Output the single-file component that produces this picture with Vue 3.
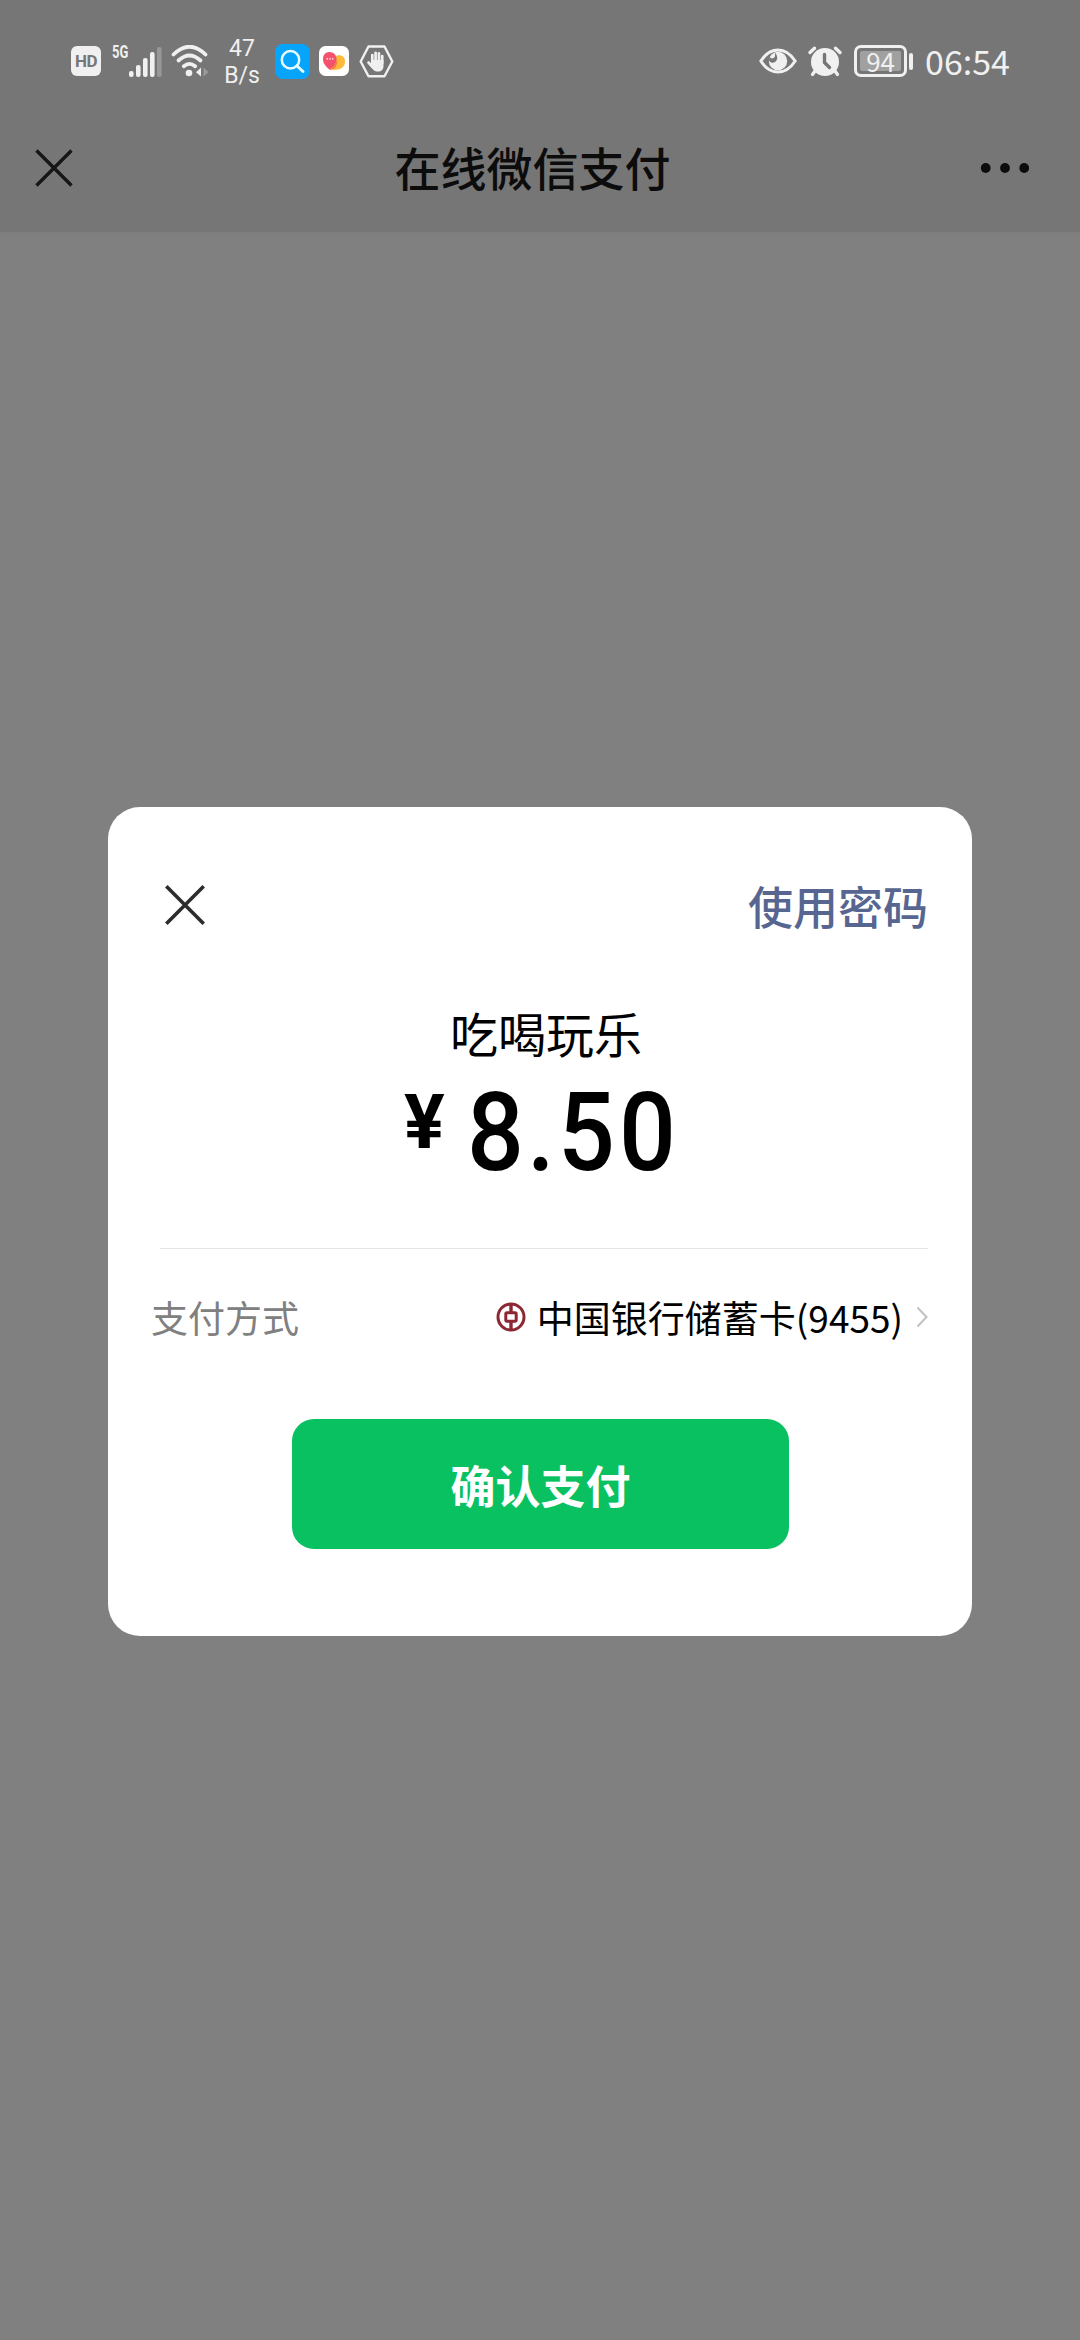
<script setup>
const signalBars = [
  { x: 0, h: 6 },
  { x: 7, h: 12 },
  { x: 14, h: 19 },
  { x: 21, h: 25 },
  { x: 28, h: 30, faded: true },
]
const payment = {
  merchant: '吃喝玩乐',
  amount: ['8', '.', '5', '0'],
  bank: '中国银行储蓄卡(9455)',
}
</script>

<template>
  <div class="screen">
    <header class="top">
      <div class="status">
        <div class="status-left">
          <span class="hd">HD</span>
          <span class="net">5G</span>
          <svg class="signal" width="33" height="31" viewBox="0 0 33 31">
            <rect
              v-for="b in signalBars" :key="b.x" :x="b.x" :y="31 - b.h"
              width="4.6" :height="b.h" rx="2" :fill="b.faded ? '#979797' : '#f0f0f0'"
            />
          </svg>
          <svg class="wifi" width="38" height="32" viewBox="0 0 38 32">
            <g fill="none" stroke="#f0f0f0" stroke-width="3.8" stroke-linecap="round">
              <path d="M2.5 9.5Q18.500 -6 34.500 9.500" />
              <path d="M7.500 15.500Q18.500 5.500 29.500 15.500" />
              <path d="M12.800 21.200Q18.500 16.500 24.200 21.200" />
            </g>
            <circle cx="18" cy="28" r="3.300" fill="#f0f0f0" />
            <path d="M25 27.200L30 22.500V31.500Z" fill="#f0f0f0" />
            <path d="M32.500 22.500L37.500 27L32.500 31.500Z" fill="#9a9a9a" />
          </svg>
          <div class="speed"><span>47</span><span>B/s</span></div>
          <svg class="search" width="35" height="35" viewBox="0 0 35 35">
            <rect width="35" height="35" rx="8" fill="#06a5fb" />
            <g fill="none" stroke="#e8fbff" stroke-width="2.500" stroke-linecap="round">
              <circle cx="15.500" cy="15.700" r="8.700" />
              <path d="M22 22L28 27.500" stroke-width="3" />
            </g>
          </svg>
          <svg class="hearts" width="30" height="30" viewBox="0 0 30 30">
            <rect width="30" height="30" rx="6.500" fill="#fff" />
            <path d="M18 9.500C23 8.500 26 11 26 15.500C26 21 22 24 14 24L10 17Z" fill="#fdbb3c" />
            <path d="M11 24C6 20 4 17 4 13C4 8.500 7 6 10.500 6C14.500 6 17.500 9 17.500 13C17.500 17 15 20.500 11 24Z" fill="#f4516c" />
            <path d="M17.500 11C18.500 16 15 21 11 24C16 24 20 18 17.500 11Z" fill="#f57b38" />
            <path d="M7.500 12.800h7" stroke="#fff" stroke-width="1.300" stroke-dasharray="1.500 1.200" />
          </svg>
          <svg class="hand" width="35" height="33" viewBox="0 0 35 33">
            <path d="M9.500 1.500H25.500L33.300 16.500L25.500 31.200H9.500L1.700 16.500Z" fill="none" stroke="#f0f0f0" stroke-width="2.400" stroke-linejoin="round" />
            <g fill="none" stroke="#f0f0f0" stroke-width="2.700" stroke-linecap="round">
              <path d="M13.300 18V10M16.600 17V7.800M19.900 17V8.300M23.200 18V11" />
              <path d="M9.500 17.500L13.500 22" />
            </g>
            <path d="M12 15H24.500V21C24.500 24.500 22.500 26.500 19 26.500C15 26.500 14 25 12 21.500Z" fill="#f0f0f0" />
          </svg>
        </div>
        <div class="status-right">
          <svg class="eye" width="38" height="26" viewBox="0 0 38 26">
            <path d="M1.800 13Q9 2 19 2T36.200 13Q29 24 19 24T1.800 13Z" fill="none" stroke="#f0f0f0" stroke-width="3" stroke-linejoin="round" />
            <circle cx="19" cy="13" r="9.200" fill="#f0f0f0" />
            <path d="M10.500 8.500Q12 11.500 15 9.800Q17 8 15.500 4.500Q18.500 7 18.200 10.500Q17 15 13 14.800Q11 14.200 10 12.500Z" fill="#767676" />
          </svg>
          <svg class="alarm" width="34" height="31" viewBox="0 0 34 31">
            <circle cx="17" cy="16" r="14" fill="#f0f0f0" />
            <g stroke="#f0f0f0" stroke-width="3.300" stroke-linecap="round">
              <path d="M2 6.500L6.500 2.200M27.500 2.200L32 6.500" />
              <path d="M7 25L4.500 28.500M27 25L29.500 28.500" />
            </g>
            <path d="M16.500 8.500V16.500L21.500 21.500" fill="none" stroke="#767676" stroke-width="3.400" stroke-linecap="round" stroke-linejoin="round" />
          </svg>
          <div class="battery"><span>94</span></div>
          <i class="nub"></i>
          <time class="clock">06:54</time>
        </div>
      </div>
      <nav class="bar">
        <svg class="bar-close" width="38" height="38" viewBox="0 0 38 38">
          <path d="M1.500 1.500L36.500 36.500M36.500 1.500L1.500 36.500" stroke="#161616" stroke-width="3.400" />
        </svg>
        <h1>在线微信支付</h1>
        <svg class="more" width="50" height="12" viewBox="0 0 50 12">
          <circle cx="5.700" cy="6" r="4.900" /><circle cx="25" cy="6" r="4.900" /><circle cx="44.200" cy="6" r="4.900" />
        </svg>
      </nav>
    </header>

    <main class="dialog">
      <div class="dialog-head">
        <svg width="40" height="40" viewBox="0 0 40 40">
          <path d="M1.300 1.300L38.700 38.700M38.700 1.300L1.300 38.700" stroke="#2c2c2c" stroke-width="3.600" />
        </svg>
        <a class="pwd">使用密码</a>
      </div>
      <p class="merchant">{{ payment.merchant }}</p>
      <div class="price">
        <span class="yen">¥</span>
        <span class="amount"><span v-for="(c, i) in payment.amount" :key="i" :class="{ dot: c === '.' }">{{ c }}</span></span>
      </div>
      <hr />
      <div class="method">
        <span class="label">支付方式</span>
        <svg class="boc" width="30" height="30" viewBox="0 0 30 30">
          <g fill="none" stroke="#8e2734">
            <circle cx="15" cy="15" r="13" stroke-width="3" />
            <rect x="9.800" y="10.800" width="10.400" height="8.400" rx="1.200" stroke-width="3" />
            <path d="M15 2V10M15 20V28" stroke-width="3.400" />
          </g>
        </svg>
        <span class="bank">{{ payment.bank }}</span>
        <svg class="chev" width="12" height="22" viewBox="0 0 12 22">
          <path d="M1.500 1.500L10.500 11L1.500 20.500" fill="none" stroke="#c4c4c4" stroke-width="2.200" />
        </svg>
      </div>
      <button class="confirm">确认支付</button>
    </main>
  </div>
</template>

<style>
body {
  margin: 0;
  background: #808080;
}
</style>

<style scoped>
.screen {
  width: 1080px;
  height: 2340px;
  overflow: hidden;
  background: #808080;
  font-family: "Noto Sans CJK SC", sans-serif;
}
.top {
  height: 232px;
  background: #767676;
  box-shadow: 0 0 5px #7a7a7a;
}
.status {
  height: 122px;
  display: flex;
  justify-content: space-between;
  align-items: center;
  padding: 0 70px 0 71px;
  color: #f0f0f0;
}
.status-left,
.status-right {
  display: flex;
  align-items: center;
}
.status svg {
  display: block;
  flex: none;
}
.hd {
  width: 30px;
  height: 30px;
  line-height: 31px;
  border-radius: 6px;
  background: #f0f0f0;
  color: #767676;
  text-align: center;
  font-family: Roboto, sans-serif;
  font-weight: 700;
  font-size: 17px;
  letter-spacing: -0.5px;
}
.net {
  width: 17px;
  margin: -18px 0 0 11px;
  font: 700 18px/18px Roboto, sans-serif;
  transform: scaleX(0.72);
  transform-origin: left;
}
.wifi {
  margin-left: 9px;
}
.speed {
  width: 36px;
  margin-left: 15px;
  display: flex;
  flex-direction: column;
  align-items: center;
  font: 400 23px/27px Roboto, sans-serif;
  margin-top: 1px;
}
.search {
  margin-left: 15px;
}
.hearts {
  margin-left: 9px;
}
.hand {
  margin-left: 10px;
}
.alarm {
  margin-left: 11px;
}
.battery {
  box-sizing: border-box;
  width: 53px;
  height: 32px;
  margin-left: 12px;
  padding: 3px;
  border: 3px solid #f0f0f0;
  border-radius: 7px;
}
.battery span {
  display: block;
  height: 20px;
  border-radius: 2px;
  background: #a0a0a0;
  text-align: center;
  font: 400 26px/20px "Noto Sans CJK SC", sans-serif;
}
.nub {
  width: 4px;
  height: 17px;
  margin-left: 2px;
  border-radius: 2px;
  background: #f0f0f0;
}
.clock {
  margin: -1px 0 0 12px;
  font-size: 34px;
  line-height: 40px;
}
.bar {
  height: 92px;
  display: flex;
  align-items: center;
  justify-content: space-between;
  padding: 0 50px 0 35px;
}
.bar h1 {
  margin: -4px 0 0 12px;
  font-size: 46px;
  line-height: 60px;
  font-weight: 500;
  color: #0c0c0c;
}
.more {
  fill: #0c0c0c;
}
.dialog {
  box-sizing: border-box;
  width: 864px;
  height: 829px;
  margin: 575px auto 0;
  padding: 60px 44px 0;
  display: flex;
  flex-direction: column;
  border-radius: 32px;
  background: #fff;
}
.dialog-head {
  height: 76px;
  display: flex;
  justify-content: space-between;
  align-items: center;
  padding-left: 13px;
}
.pwd {
  margin-top: 2px;
  font-size: 45px;
  line-height: 60px;
  font-weight: 500;
  color: #576690;
}
.merchant {
  margin: 56px 0 0 12px;
  text-align: center;
  font-size: 48px;
  line-height: 66px;
  color: #000;
}
.price {
  height: 115px;
  display: flex;
  align-items: flex-start;
  padding-left: 252px;
  color: #000;
}
.yen {
  width: 40px;
  margin-top: 19px;
  text-align: center;
  font: 700 76px/76px Roboto, sans-serif;
}
.amount {
  display: flex;
  margin: 14px 0 0 21px;
  font: 500 110px/108px Roboto, sans-serif;
}
.amount span {
  display: flex;
  justify-content: center;
  width: 61px;
  transform: scaleX(0.91);
}
.amount .dot {
  width: 30px;
}
hr {
  width: 768px;
  height: 1px;
  margin: 68px 0 0 8px;
  border: 0;
  background: #e4e4e4;
}
.method {
  display: flex;
  align-items: center;
  height: 60px;
  margin-top: 38px;
  font-size: 37px;
  line-height: 60px;
}
.label {
  margin-left: -1px;
  color: #808080;
}
.boc {
  margin-left: auto;
}
.bank {
  margin-left: 11px;
  color: #000;
  white-space: nowrap;
}
.chev {
  margin: 0 0 0 13px;
}
.confirm {
  width: 497px;
  height: 130px;
  margin: 72px 0 0 140px;
  padding: 2px 0 0;
  border: 0;
  border-radius: 22px;
  background: #09c160;
  color: #fff;
  font: 700 45px/128px "Noto Sans CJK SC", sans-serif;
}
</style>
